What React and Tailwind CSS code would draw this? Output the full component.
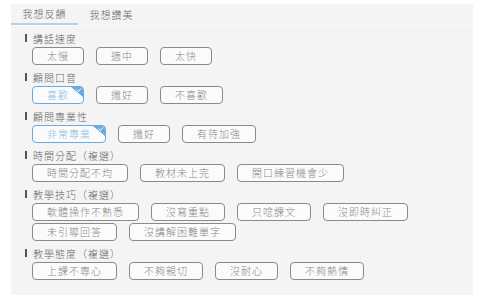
import React, { useState } from 'react';

const sections = [
    { title: '講話速度', options: ['太慢', '適中', '太快'], selected: null },
    { title: '顧問口音', options: ['喜歡', '還好', '不喜歡'], selected: '喜歡' },
    { title: '顧問專業性', options: ['非常專業', '還好', '有待加強'], selected: '非常專業' },
    { title: '時間分配（複選）', options: ['時間分配不均', '教材未上完', '開口練習機會少'] },
    { title: '教學技巧（複選）', options: ['軟體操作不熟悉', '沒寫重點', '只唸課文', '沒即時糾正', '未引導回答', '沒講解困難單字'] },
    { title: '教學態度（複選）', options: ['上課不專心', '不夠親切', '沒耐心', '不夠熱情'] },
];

const Option = ({ label, active }) => (
    <button
        className={`relative h-[18px] px-[14px] rounded-[4px] border text-[10px] font-light leading-none tracking-[1px] overflow-hidden bg-[#fbfbfb] ${
            active ? 'border-[#6aaae0] text-[#8dbde6]' : 'border-[#8a8a8a] text-[#888]'
        }`}
    >
        {label}
        {active && (
            <svg className="absolute top-0 right-0" width="12" height="10" viewBox="0 0 12 10">
                <path d="M0 0H12V10Z" fill="#6aaae0" />
                <path d="M5.5 2.5L7.5 4.5L10 1.5" stroke="#fff" strokeWidth="1" fill="none" />
            </svg>
        )}
    </button>
);

const App = () => {
    const [tab, setTab] = useState(0);

    return (
        <div className="w-[480px] h-[300px] bg-white pt-[4px] pl-[11px] font-['Noto_Sans_CJK_TC','Noto_Sans',sans-serif]">
            <div className="w-[462px] h-[291px] bg-[#f4f4f4]">
                {/* tabs */}
                <div className="flex h-[22px] border-b border-[#fbfbfb]">
                    {['我想反饋', '我想讚美'].map((t, i) => (
                        <div
                            key={t}
                            onClick={() => setTab(i)}
                            className={`w-[67px] flex items-center justify-center text-[10px] font-light tracking-[1px] text-[#666] ${
                                tab === i ? 'border-b-2 border-[#b3d1ee]' : ''
                            }`}
                        >
                            {t}
                        </div>
                    ))}
                </div>

                <div className="pt-[6px] pl-[14px]">
                    {sections.map((s) => (
                        <div key={s.title} className="mb-[6px]">
                            <div className="flex items-center h-[12px] text-[10px] font-light tracking-[1px] text-[#666]">
                                <span className="w-[2px] h-[8px] bg-[#555] mr-[6px]"></span>
                                {s.title}
                            </div>
                            <div className="flex flex-wrap gap-x-3 gap-y-[2px] mt-[3px] pl-[7px] w-[420px]">
                                {s.options.map((o) => (
                                    <Option key={o} label={o} active={s.selected === o} />
                                ))}
                            </div>
                        </div>
                    ))}
                </div>
            </div>
        </div>
    );
};

export default App;
